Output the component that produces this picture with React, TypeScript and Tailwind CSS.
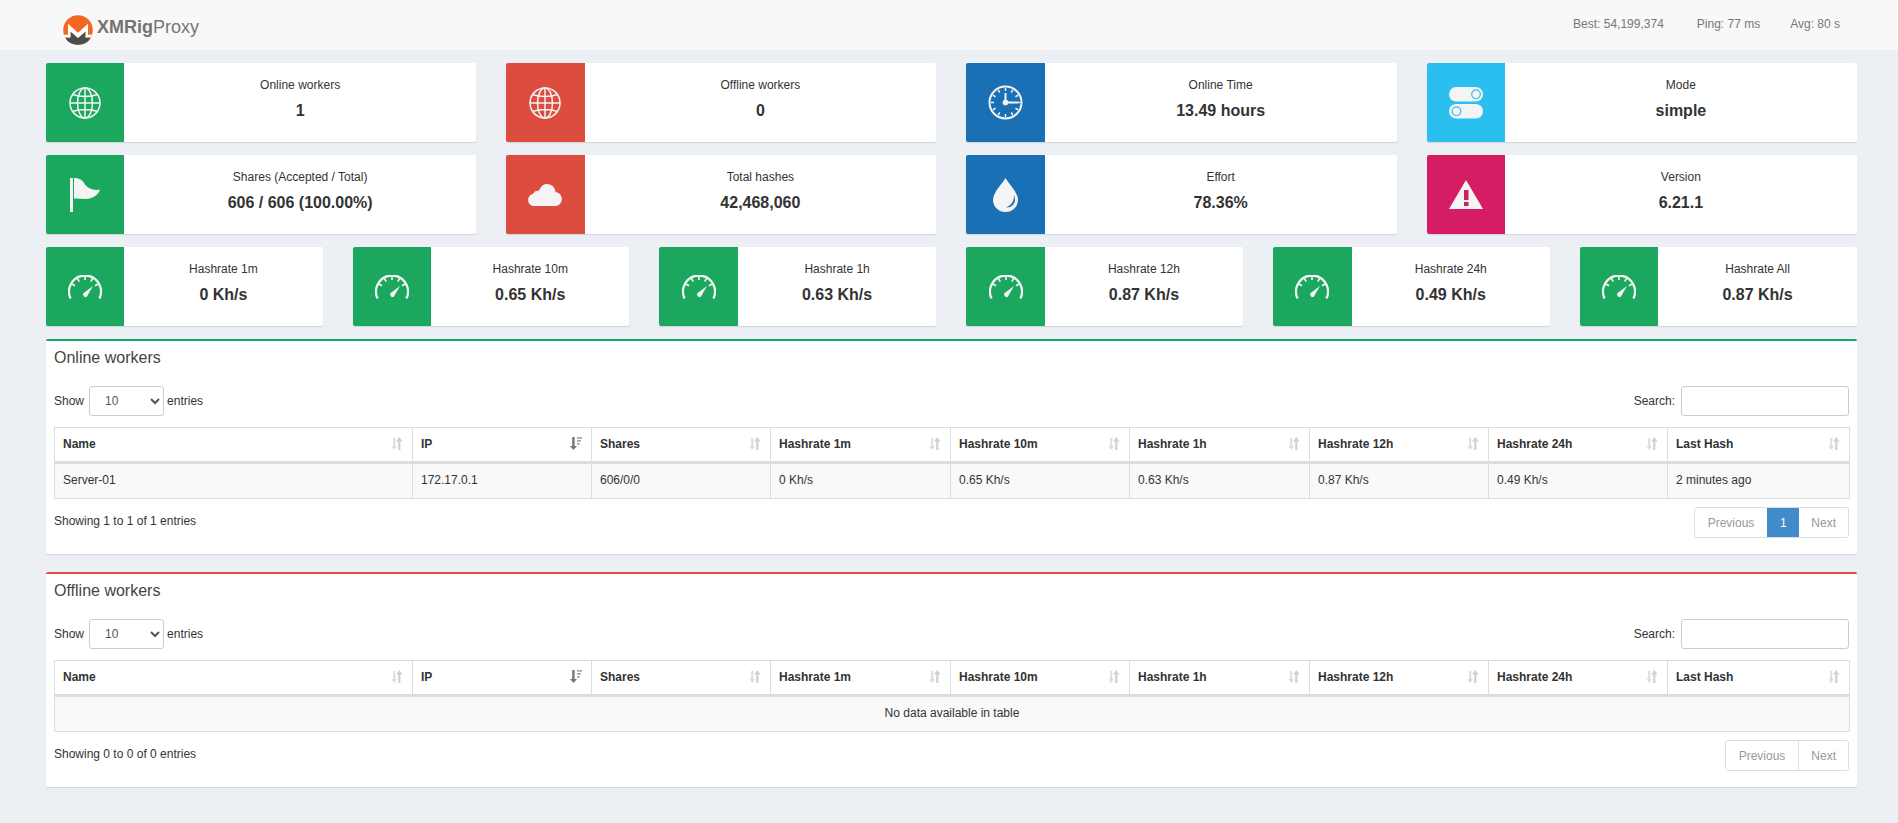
import type { ReactNode } from 'react'

const FG = '#f4f4f4'

function Globe() {
  return (
    <svg width="32" height="32" viewBox="0 0 32 32" fill="none" stroke={FG} strokeWidth="1.500">
      <circle cx="16" cy="16" r="15" />
      <ellipse cx="16" cy="16" rx="7.500" ry="15" />
      <path d="M16 1v30M1 16h30M3.500 7.500c7 2.600 18 2.600 25 0M3.500 24.500c7-2.600 18-2.600 25 0" />
    </svg>
  )
}

function Clock() {
  const ticks = [0, 30, 60, 90, 120, 150, 180, 210, 240, 270, 300, 330]
  return (
    <svg width="35" height="35" viewBox="0 0 35 35" fill="none" stroke={FG}>
      <circle cx="17.500" cy="17.500" r="16" strokeWidth="2" />
      {ticks.map((t) => (
        <path key={t} d="M17.500 3v3" strokeWidth="1.500" transform={`rotate(${t} 17.500 17.500)`} />
      ))}
      <path d="M17.500 8v9.500h12" strokeWidth="2" />
      <circle cx="17.500" cy="17.500" r="2.500" fill={FG} />
    </svg>
  )
}

function Flag() {
  return (
    <svg width="30" height="34" viewBox="0 0 30 34" fill={FG}>
      <rect x="0" y="0" width="3" height="34" />
      <path d="M4 0c5 0 8 1.500 10 5 2.500 5 10 8 16 6.500-1 5-8 9.500-14 9.500-4 0-8-.5-12-.5z" />
    </svg>
  )
}

function Cloud() {
  return (
    <svg width="35" height="22" viewBox="0 0 35 22" fill={FG}>
      <path d="M6 22a6 6 0 0 1-1-11.900 5.500 5.500 0 0 1 6-3.300C12.500 2.700 15.500 0 19 0c4.600 0 8.300 3.600 8.500 8.100A7 7 0 0 1 28 22z" />
    </svg>
  )
}

function Drop({ bg }: { bg: string }) {
  return (
    <svg width="25" height="34" viewBox="0 0 25 34" fill={FG}>
      <path d="M12.500 0C10 5 0 14 0 22a12.500 12 0 0 0 25 0C25 14 15 5 12.500 0z" />
      <path d="M21 17c.5 5-2 10-8 12.500 5.500.5 9-3.500 9-8 0-1.500-.3-3-1-4.500z" fill={bg} />
    </svg>
  )
}

function Toggles({ bg }: { bg: string }) {
  return (
    <svg width="34" height="32" viewBox="0 0 34 32">
      <rect x="0" y="0" width="34" height="14.500" rx="7.200" fill={FG} />
      <circle cx="27" cy="7.200" r="4.300" fill={FG} stroke={bg} strokeWidth="1.200" />
      <rect x="0" y="17" width="34" height="14.500" rx="7.200" fill={FG} />
      <circle cx="7.500" cy="24.200" r="4.300" fill={FG} stroke={bg} strokeWidth="1.200" />
    </svg>
  )
}

function Warning({ bg }: { bg: string }) {
  return (
    <svg width="34" height="29" viewBox="0 0 34 29" fill={FG}>
      <path d="M17 0l17 29H0z" />
      <rect x="15" y="10" width="4.500" height="10" fill={bg} />
      <rect x="15" y="22" width="4.500" height="4" fill={bg} />
    </svg>
  )
}

function Gauge() {
  const ticks = [-60, -30, 0, 30, 60]
  return (
    <svg width="34" height="24" viewBox="0 0 34 24" fill="none" stroke={FG}>
      <path d="M2.600 23.500A16 16 0 1 1 31.400 23.500" strokeWidth="2.300" />
      {ticks.map((t) => (
        <path key={t} d="M17 1.500v3.500" strokeWidth="1.600" transform={`rotate(${t} 17 16.500)`} />
      ))}
      <path d="M25 11L18.800 21.800A2.700 2.700 0 0 1 15.300 18.200z" fill={FG} stroke="none" />
    </svg>
  )
}

function SortIcon({ active }: { active?: boolean }) {
  if (active) {
    return (
      <svg width="12" height="13" viewBox="0 0 12 13" className="shrink-0" fill="#777">
        <path d="M2.200 0h2.400v9H7l-3.600 4L0 9h2.200z" />
        <path d="M7 0h5v1.800H7zM7 3h4v1.800H7zM7 6h2.800v1.800H7z" fill="#aaa" />
      </svg>
    )
  }
  return (
    <svg width="12" height="13" viewBox="0 0 12 13" className="shrink-0">
      <path d="M2.200 1h2v8H6l-2.800 4L.4 9h1.800z" fill="#dcdcdc" />
      <path d="M7.200 13h2.200V4.500h2.200L8.300 0 5 4.500h2.200z" fill="#d0d0d0" />
    </svg>
  )
}

function MoneroLogo() {
  return (
    <svg width="30" height="30" viewBox="0 0 30 30">
      <circle cx="15" cy="15" r="14.800" fill="#f26822" />
      <path d="M2 22.500A14.800 14.800 0 0 0 15 29.800 14.800 14.800 0 0 0 28 22.500h-5.500v-6l-7.500 6.500-7.500-6.500v6z" fill="#4d4d4d" />
      <path d="M.9 19.800H5V8.800l10 9 10-9v11h4.100a14.800 14.800 0 0 1-1.100 2.700h-5.500v-6L15 23l-7.500-6.500v6H2a14.800 14.800 0 0 1-1.100-2.700z" fill="#fff" />
    </svg>
  )
}

interface InfoCardProps {
  icon: ReactNode
  color: string
  title: string
  value: string
}

function InfoCard({ icon, color, title, value }: InfoCardProps) {
  return (
    <div className="flex h-[79px] min-w-0 rounded-[2px] bg-white shadow-[0_1px_1px_rgba(0,0,0,0.12)]">
      <div
        className={`flex w-[78.5px] shrink-0 items-center justify-center rounded-l-[2px] ${color}`}
      >
        {icon}
      </div>
      <div className="flex-1 pt-[14px] text-center">
        <div className="text-[12px] leading-[17px] text-[#333]">{title}</div>
        <div className="mt-[8px] text-[16px] leading-[18px] font-bold text-[#333]">{value}</div>
      </div>
    </div>
  )
}

const GREEN = 'bg-[#1ba85e]'
const RED = 'bg-[#dc4c3f]'
const BLUE = 'bg-[#1a70b5]'
const AQUA = 'bg-[#2bbfef]'
const PINK = 'bg-[#d51d63]'

const topCards = [
  { icon: <Globe />, color: GREEN, title: 'Online workers', value: '1' },
  { icon: <Globe />, color: RED, title: 'Offline workers', value: '0' },
  { icon: <Clock />, color: BLUE, title: 'Online Time', value: '13.49 hours' },
  { icon: <Toggles bg="#2bbfef" />, color: AQUA, title: 'Mode', value: 'simple' },
  { icon: <Flag />, color: GREEN, title: 'Shares (Accepted / Total)', value: '606 / 606 (100.00%)' },
  { icon: <Cloud />, color: RED, title: 'Total hashes', value: '42,468,060' },
  { icon: <Drop bg="#1a70b5" />, color: BLUE, title: 'Effort', value: '78.36%' },
  { icon: <Warning bg="#d51d63" />, color: PINK, title: 'Version', value: '6.21.1' },
]

const hashrates = [
  { title: 'Hashrate 1m', value: '0 Kh/s' },
  { title: 'Hashrate 10m', value: '0.65 Kh/s' },
  { title: 'Hashrate 1h', value: '0.63 Kh/s' },
  { title: 'Hashrate 12h', value: '0.87 Kh/s' },
  { title: 'Hashrate 24h', value: '0.49 Kh/s' },
  { title: 'Hashrate All', value: '0.87 Kh/s' },
]

const columns = [
  { name: 'Name', width: 'w-[358px]' },
  { name: 'IP', width: 'w-[179px]', active: true },
  { name: 'Shares', width: 'w-[179px]' },
  { name: 'Hashrate 1m', width: 'w-[180px]' },
  { name: 'Hashrate 10m', width: 'w-[179px]' },
  { name: 'Hashrate 1h', width: 'w-[180px]' },
  { name: 'Hashrate 12h', width: 'w-[179px]' },
  { name: 'Hashrate 24h', width: 'w-[179px]' },
  { name: 'Last Hash', width: 'w-[182px]' },
]

interface WorkersBoxProps {
  title: string
  accent: string
  rows: string[][]
  info: string
  pages: string[]
}

function WorkersBox({ title, accent, rows, info, pages }: WorkersBoxProps) {
  return (
    <section className={`h-[215px] rounded-[2px] border-t-2 bg-white pr-[7.75px] pl-[8.25px] shadow-[0_1px_1px_rgba(0,0,0,0.12)] ${accent}`}>
      <h3 className="pt-[7px] text-[16px] leading-[20px] font-normal text-[#444]">{title}</h3>

      <div className="mt-[18px] flex h-[30px] items-center justify-between text-[12px] text-[#333]">
        <label className="flex items-center">
          Show
          <select className="mr-[3px] ml-[5px] h-[30px] w-[75px] rounded-[3px] border border-[#ccc] bg-white pl-[11px] text-[12px] text-[#555]">
            <option>10</option>
          </select>
          entries
        </label>
        <label className="flex items-center gap-[6px]">
          Search:
          <input type="search" className="h-[30px] w-[168px] rounded-[3px] border border-[#ccc] bg-white" />
        </label>
      </div>

      <table className="mt-[11px] w-full table-fixed border-collapse text-[12px] text-[#333]">
        <colgroup>
          {columns.map((c) => (
            <col key={c.name} className={c.width} />
          ))}
        </colgroup>
        <thead>
          <tr>
            {columns.map((c) => (
              <th key={c.name} className="h-[35px] border border-b-[3px] border-[#ddd] pr-[9px] pb-[2px] pl-2 text-left font-bold">
                <div className="flex items-center justify-between">
                  {c.name}
                  <SortIcon active={c.active} />
                </div>
              </th>
            ))}
          </tr>
        </thead>
        <tbody>
          {rows.length > 0 ? (
            rows.map((row) => (
              <tr key={row[0]} className="bg-[#f9f9f9]">
                {row.map((cell, i) => (
                  <td key={i} className="h-[36px] border border-[#ddd] px-2 pb-[2px]">
                    {cell}
                  </td>
                ))}
              </tr>
            ))
          ) : (
            <tr className="bg-[#f9f9f9]">
              <td colSpan={9} className="h-[36px] border border-[#ddd] px-2 pb-[2px] text-center">
                No data available in table
              </td>
            </tr>
          )}
        </tbody>
      </table>

      <div className="mt-2 flex items-center justify-between text-[12px] text-[#333]">
        <div className="pb-[4px]">{info}</div>
        <div className="flex h-[31px] overflow-hidden rounded-[3px] border border-[#ddd] text-[#999]">
          <span className="flex items-center px-[13px]">Previous</span>
          {pages.map((p) => (
            <span key={p} className="-my-px flex w-[32px] items-center justify-center bg-[#428bca] text-white">
              {p}
            </span>
          ))}
          <span className={`flex items-center px-[12px] ${pages.length === 0 ? 'border-l border-[#ddd]' : ''}`}>Next</span>
        </div>
      </div>
    </section>
  )
}

export default function App() {
  return (
    <div className="min-h-screen bg-[#ecf0f5] font-['Liberation_Sans',Arial,sans-serif]">
      <header className="flex h-[50px] items-center justify-between bg-[#f8f8f8] pr-[58px] pl-[63px]">
        <div className="flex items-center gap-[4px] pt-[10px]">
          <MoneroLogo />
          <span className="pb-[6px] text-[18px] text-[#777]">
            <b className="text-[#737373]">XMRig</b>Proxy
          </span>
        </div>
        <div className="flex pb-[2px] text-[12px] text-[#777]">
          <span className="mr-[33px]">Best: 54,199,374</span>
          <span className="mr-[30px]">Ping: 77 ms</span>
          <span>Avg: 80 s</span>
        </div>
      </header>

      <main className="flex flex-col gap-[13px] pt-[13px] pr-[41.25px] pb-[36px] pl-[45.75px]">
        <div className="grid grid-cols-4 gap-x-[30px] gap-y-[13px]">
          {topCards.map((card) => (
            <InfoCard key={card.title} {...card} />
          ))}
        </div>

        <div className="grid grid-cols-6 gap-x-[30px]">
          {hashrates.map((h) => (
            <InfoCard key={h.title} icon={<Gauge />} color={GREEN} title={h.title} value={h.value} />
          ))}
        </div>

        <div className="flex flex-col gap-[18px]">
          <WorkersBox
            title="Online workers"
            accent="border-[#1ba85e]"
            rows={[['Server-01', '172.17.0.1', '606/0/0', '0 Kh/s', '0.65 Kh/s', '0.63 Kh/s', '0.87 Kh/s', '0.49 Kh/s', '2 minutes ago']]}
            info="Showing 1 to 1 of 1 entries"
            pages={['1']}
          />
          <WorkersBox
            title="Offline workers"
            accent="border-[#dc4c3f]"
            rows={[]}
            info="Showing 0 to 0 of 0 entries"
            pages={[]}
          />
        </div>
      </main>
    </div>
  )
}
